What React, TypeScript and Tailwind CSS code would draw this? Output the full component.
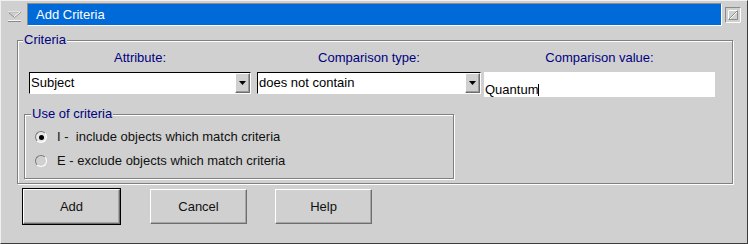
function Dropdown({ value, className }: { value: string; className: string }) {
  return (
    <div
      className={`flex h-[22px] border border-t-black border-l-black border-b-white border-r-white bg-white ${className}`}
    >
      <span className="flex-1 pl-[1px] leading-[20px] text-black">{value}</span>
      <span className="flex h-[20px] w-[15px] items-center justify-center border border-t-white border-l-white border-b-[#6e6e6e] border-r-[#6e6e6e] bg-[#d0d0d0] shadow-[inset_-1px_-1px_0_#9a9a9a]">
        <svg width="7" height="4" viewBox="0 0 7 4">
          <polygon points="0,0 7,0 3.5,4" fill="#000" />
        </svg>
      </span>
    </div>
  )
}

function Radio({ checked, label }: { checked?: boolean; label: string }) {
  return (
    <div className="flex h-[16px] items-center pl-[10px]">
      <span
        className={`flex h-[12px] w-[12px] items-center justify-center rounded-full border border-t-[#7a7a7a] border-l-[#7a7a7a] border-b-white border-r-white ${
          checked ? 'bg-[#e6e6e6]' : 'bg-[#d0d0d0]'
        }`}
      >
        {checked && <span className="h-[5px] w-[5px] rounded-full bg-black" />}
      </span>
      <span className="ml-[10px] whitespace-pre leading-[16px] text-[#111]">{label}</span>
    </div>
  )
}

function Button({ label, isDefault }: { label: string; isDefault?: boolean }) {
  const face = (
    <div className="flex h-[35px] w-[97px] items-center justify-center border border-t-white border-l-white border-b-[#6e6e6e] border-r-[#6e6e6e] bg-[#d0d0d0] shadow-[inset_-1px_-1px_0_#a6a6a6] text-[#111]">
      {label}
    </div>
  )
  if (isDefault) return <div className="border border-black">{face}</div>
  return face
}

export default function App() {
  return (
    <div className="flex h-[244px] w-[748px] flex-col overflow-hidden border border-t-[#f0f0f0] border-l-[#f0f0f0] border-b-[#3c3c3c] border-r-[#3c3c3c] bg-[#d0d0d0] font-['Liberation_Sans',Arial,sans-serif] text-[13px]">
      {/* title bar */}
      <div className="mt-[2px] flex items-start">
        <div className="flex h-[23px] w-[26px] items-start pl-[6px] pt-[8px]">
          <svg width="15" height="11" viewBox="0 0 15 11">
            <polyline points="1.5,1.5 13.5,1.5 7.5,6.5 1.5,1.5" fill="none" stroke="#8a8a8a" strokeWidth="1" />
            <polyline points="1,1 13,1 7,6" fill="none" stroke="#f4f4f4" strokeWidth="1" />
            <line x1="1" y1="9.5" x2="14" y2="9.5" stroke="#f4f4f4" strokeWidth="1" />
            <line x1="1" y1="10.5" x2="14" y2="10.5" stroke="#8a8a8a" strokeWidth="1" />
          </svg>
        </div>
        <div className="flex h-[23px] w-[695px] items-center border border-t-[#8c8c8c] border-l-[#8c8c8c] border-b-white border-r-white bg-[#006ad8] pl-[8px] text-[13px] text-white">
          Add Criteria
        </div>
        <div className="ml-[3px] mt-[4px]">
          <svg width="16" height="16" viewBox="0 0 16 16">
            <rect x="0.5" y="0.5" width="15" height="15" fill="none" stroke="#8a8a8a" />
            <path d="M15.5 0.5 V15.5 H0.5" fill="none" stroke="#ffffff" />
            <path d="M3.5 12.5 V3.5 H12.5" fill="none" stroke="#ffffff" />
            <path d="M12.5 3.5 V12.5 H3.5" fill="none" stroke="#8a8a8a" />
            <line x1="4" y1="12" x2="12" y2="4" stroke="#8a8a8a" />
            <line x1="5" y1="12" x2="12" y2="5" stroke="#ffffff" />
          </svg>
        </div>
      </div>

      {/* Criteria group */}
      <div className="relative ml-[16px] mt-[14px] h-[144px] w-[716px] border border-[#808080] pt-[9px] shadow-[inset_1px_1px_0_#fff,1px_1px_0_#fff]">
        <span className="absolute -top-[9px] left-[5px] bg-[#d0d0d0] px-[1px] leading-[16px] text-[#000080]">
          Criteria
        </span>
        <div className="ml-[11px] flex leading-[15px] text-[#000080]">
          <span className="w-[222px] text-center">Attribute:</span>
          <span className="ml-[6px] w-[224px] text-center">Comparison type:</span>
          <span className="ml-[3px] w-[231px] text-center">Comparison value:</span>
        </div>
        <div className="ml-[11px] mt-[7px] flex items-start">
          <Dropdown value="Subject" className="w-[222px]" />
          <Dropdown value="does not contain" className="ml-[6px] w-[224px]" />
          <div className="ml-[3px] flex h-[25px] w-[231px] items-end bg-white pl-[1px]">
            <span className="leading-[15px] text-black">Quantum</span>
            <span className="mb-[1px] h-[12px] w-[1px] bg-black" />
          </div>
        </div>

        {/* Use of criteria group */}
        <div className="relative ml-[6px] mt-[17px] h-[65px] w-[430px] border border-[#808080] pt-[14px] shadow-[inset_1px_1px_0_#fff,1px_1px_0_#fff]">
          <span className="absolute -top-[9px] left-[6px] bg-[#d0d0d0] px-[1px] leading-[16px] text-[#000080]">
            Use of criteria
          </span>
          <Radio checked label="I -  include objects which match criteria" />
          <div className="mt-[8px]">
            <Radio label="E - exclude objects which match criteria" />
          </div>
        </div>
      </div>

      {/* buttons */}
      <div className="mt-[4px] flex items-center pl-[21px]">
        <Button label="Add" isDefault />
        <div className="ml-[29px]">
          <Button label="Cancel" />
        </div>
        <div className="ml-[28px]">
          <Button label="Help" />
        </div>
      </div>
    </div>
  )
}
